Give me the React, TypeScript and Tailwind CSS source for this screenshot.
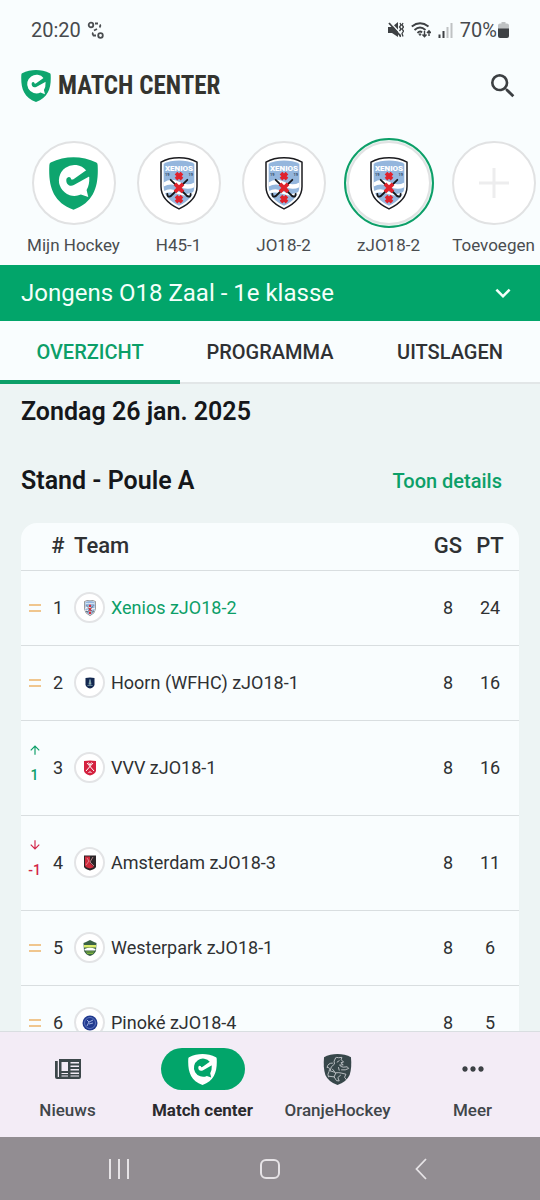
import { useState } from 'react';
import { MdSearch, MdArrowUpward, MdArrowDownward, MdMoreHoriz, MdKeyboardArrowDown } from 'react-icons/md';

type Trend = 'same' | 'up' | 'down';
type Crest = 'xenios' | 'hoorn' | 'vvv' | 'amsterdam' | 'westerpark' | 'pinoke';

interface Standing {
  rank: number;
  team: string;
  crest: Crest;
  trend: Trend;
  shift?: number;
  played: number;
  points: number;
}

const standings: Standing[] = [
  { rank: 1, team: 'Xenios zJO18-2', crest: 'xenios', trend: 'same', played: 8, points: 24 },
  { rank: 2, team: 'Hoorn (WFHC) zJO18-1', crest: 'hoorn', trend: 'same', played: 8, points: 16 },
  { rank: 3, team: 'VVV zJO18-1', crest: 'vvv', trend: 'up', shift: 1, played: 8, points: 16 },
  { rank: 4, team: 'Amsterdam zJO18-3', crest: 'amsterdam', trend: 'down', shift: -1, played: 8, points: 11 },
  { rank: 5, team: 'Westerpark zJO18-1', crest: 'westerpark', trend: 'same', played: 8, points: 6 },
  { rank: 6, team: 'Pinoké zJO18-4', crest: 'pinoke', trend: 'same', played: 8, points: 5 },
];

const teams = ['Mijn Hockey', 'H45-1', 'JO18-2', 'zJO18-2', 'Toevoegen'];
const tabs = ['OVERZICHT', 'PROGRAMMA', 'UITSLAGEN'];

function MatchLogo({ className, shield, mark }: { className: string; shield: string; mark: string }) {
  return (
    <svg viewBox="0 0 146 157" className={className} aria-hidden="true">
      <path d="M73 0C95 0 120 5 141 16Q145 18 145 24C148 84 136 134 73 157C10 134 -2 84 1 24Q1 18 5 16C26 5 51 0 73 0Z" fill={shield} />
      <path d="M111 40A46 46 0 1 0 95 111L117 119L112 98Q121 84 120 60Z" fill={mark} />
      <path d="M115 36L74 65C68 69 65 66 65 62Q58 56 52 64C49 78 60 90 74 83L125 55Z" fill={shield} />
    </svg>
  );
}

function XeniosCrest({ className }: { className: string }) {
  return (
    <svg viewBox="0 0 114 158" className={className} aria-hidden="true">
      <path d="M57 2Q88 2 111 15V88Q111 130 57 155Q3 130 3 88V15Q26 2 57 2Z" fill="#fff" stroke="#1b1b1f" strokeWidth="4.500" />
      <path d="M57 10Q84 10 103 20V88Q103 123 57 146Q11 123 11 88V20Q30 10 57 10Z" fill="#94b6dd" />
      <path d="M11 76Q32 60 57 74T103 76V90Q82 100 57 88T11 88ZM11 102Q32 90 57 104T103 102V109Q82 120 57 111T11 109Z" fill="#fff" />
      <text x="57" y="41" textAnchor="middle" fill="#fff" fontFamily="Roboto, sans-serif" fontWeight="900" fontSize="24">XENIOS</text>
      <text x="22" y="57" textAnchor="middle" fill="#33475f" fontFamily="Roboto, sans-serif" fontWeight="600" fontSize="12">19</text>
      <text x="92" y="57" textAnchor="middle" fill="#33475f" fontFamily="Roboto, sans-serif" fontWeight="600" fontSize="12">19</text>
      <path d="M32 68L82 117Q92 122 92 110M82 68L32 117Q22 122 22 110" fill="none" stroke="#17171a" strokeWidth="5.500" strokeLinecap="round" />
      <g stroke="#e0222c" strokeWidth="11" fill="none">
        <path d="M48 48L66 66M66 48L48 66" />
        <path d="M45 80L69 104M69 80L45 104" />
        <path d="M48 117L66 135M66 117L48 135" />
      </g>
    </svg>
  );
}

function LionShield({ className }: { className: string }) {
  return (
    <svg viewBox="0 0 86 92" className={className} aria-hidden="true">
      <path d="M43 0C57 0 72 3 83 10Q86 42 79 62Q70 82 43 92Q16 82 7 62Q0 42 3 10C14 3 29 0 43 0Z" fill="#37474a" />
      <g fill="none" stroke="#c9cdd0" strokeWidth="2.600" strokeLinecap="round" strokeLinejoin="round">
        <path d="M37 12Q40 8 46 11L56 10L54 17L61 24L53 26L60 32L49 33Q53 38 60 39L72 38L76 43L66 47L55 47" />
        <path d="M37 12Q30 22 34 30Q22 36 21 50Q30 52 38 56Q46 54 56 57L68 60L64 69L70 77M38 56L33 68L18 66M33 68L40 79L48 80L44 70L52 63" />
        <path d="M28 27Q15 26 12 40Q22 38 18 52Q12 60 16 68M42 24L48 20M46 40L48 48M28 45L34 52" />
      </g>
    </svg>
  );
}

function TeamCrest({ crest }: { crest: Crest }) {
  if (crest === 'xenios') return <XeniosCrest className="h-4 w-3" />;
  return (
    <svg viewBox="0 0 16 16" className="size-4" aria-hidden="true">
      {crest === 'hoorn' && (
        <>
          <path d="M3.500 3Q8 2 12.500 3V9.500Q12 12.500 8 13.500Q4 12.500 3.500 9.500Z" fill="#14284f" />
          <path d="M8 4.500L9 9H7ZM5.500 10.500Q8 9.500 10.500 10.500" fill="#d8cf63" stroke="#7ba5c4" strokeWidth=".8" />
        </>
      )}
      {crest === 'vvv' && (
        <>
          <path d="M2 1Q8 0 14 1V11Q13 14 8 15.500Q3 14 2 11Z" fill="#d4213f" />
          <path d="M5 3L12 11M11 3L4 11M6.500 2.500L8 5L9.500 2.500M6.500 13L8 11.500L9.500 13" fill="none" stroke="#fff" strokeWidth="1" />
        </>
      )}
      {crest === 'amsterdam' && (
        <>
          <path d="M2 0.500H14V12Q13 14 8 15.500Q3 14 2 12Z" fill="#2c2528" />
          <path d="M3 1.500H8V8L12 12L8 13.500Q4 12.500 3 11Z" fill="#cf2a3c" />
          <path d="M4 10L7 6L5 3M11 2L8 7L12 11" fill="none" stroke="#eaa8ae" strokeWidth=".7" />
        </>
      )}
      {crest === 'westerpark' && (
        <>
          <path d="M4 2L8 0L12 2L14.500 3L14 11Q12 15 8 16Q4 15 2 11L1.500 3Z" fill="#3a6145" />
          <path d="M2 5H14V7.500H2Z" fill="#d9eb68" />
          <path d="M2.500 9Q8 6.500 13.500 9V10.500H2.500Z" fill="#fff" />
          <path d="M4 12H12M5 13.500H11" stroke="#7fb53c" strokeWidth="1" />
        </>
      )}
      {crest === 'pinoke' && (
        <>
          <circle cx="8" cy="8" r="7.500" fill="#213a8f" />
          <circle cx="8" cy="8" r="5.500" fill="none" stroke="#6d83c7" strokeWidth=".8" />
          <path d="M5 11L7 7L11 5M7 9L11 8M7 7L5 5" fill="none" stroke="#9fb0e0" strokeWidth="1" />
        </>
      )}
    </svg>
  );
}

function TrendMark({ trend, shift }: { trend: Trend; shift?: number }) {
  if (trend === 'same') {
    return (
      <div className="mx-auto flex w-3 flex-col gap-1">
        <span className="h-0.5 bg-[#f0c68e]" />
        <span className="h-0.5 bg-[#f0c68e]" />
      </div>
    );
  }
  const up = trend === 'up';
  return (
    <div className={`flex flex-col items-center gap-2 text-sm leading-5 font-medium ${up ? 'text-[#0c9f68]' : 'text-[#d32548]'}`}>
      {up ? <MdArrowUpward className="size-3.5" /> : <MdArrowDownward className="size-3.5" />}
      {shift}
    </div>
  );
}

function StatusBar() {
  return (
    <div className="flex h-[60px] shrink-0 items-center justify-between pr-[31px] pl-[31px] text-xl text-[#474a4d]">
      <div className="flex items-center gap-1.5">
        <span>20:20</span>
        <svg viewBox="0 0 18 18" className="size-[18px]" fill="none" stroke="#4b4e51" strokeWidth="1.800" aria-hidden="true">
          <circle cx="4" cy="4" r="2.300" />
          <circle cx="13.500" cy="14.500" r="2.300" />
          <path d="M8 2.500H11M13 3.500Q14 5 12.500 6.500M10 8L7 9.500M6 11.500Q5 13 6.500 14.500H9" />
        </svg>
      </div>
      <div className="flex items-center gap-[7px]">
        <svg viewBox="0 0 16 16" className="size-4" aria-hidden="true">
          <path d="M0 5H4L10 0V15L4 11H0Z" fill="#3e4144" />
          <path d="M1.500 -.5L15 14" stroke="#f9fdfe" strokeWidth="1.500" />
          <path d="M1 1L12.500 14" stroke="#3e4144" strokeWidth="1.800" />
          <path d="M12 1L13 3L11.500 5L13 7L11.500 9M15 1L14 3L15.500 5L14 7L15.500 9L14 11.500L15 14.500M11.500 12L12.500 15" fill="none" stroke="#3e4144" strokeWidth="1.300" />
        </svg>
        <svg viewBox="0 0 20 16" className="h-4 w-5" fill="none" stroke="#3e4144" strokeWidth="1.900" aria-hidden="true">
          <path d="M.8 4.500Q9 -2 17.500 4.500M3.500 8Q9 3 14.500 8M6.500 11Q9 8.500 11 10.500" />
          <circle cx="9" cy="12.500" r=".8" fill="#3e4144" strokeWidth="1" />
          <path d="M13.500 9V14.500M11.500 12.500L13.500 14.800L15.500 12.500M18 14V9M16 11L18 8.700L20 11" strokeWidth="1.400" />
        </svg>
        <svg viewBox="0 0 15 16" className="h-4 w-[15px]" aria-hidden="true">
          <path d="M1.500 12.500V16M5.500 9V16" stroke="#3e4144" strokeWidth="2" />
          <path d="M9.500 5V16M13.500 1V16" stroke="#bfc2c3" strokeWidth="2" />
        </svg>
        <div className="flex items-center gap-px">
          <span>70%</span>
          <svg viewBox="0 0 11 16" className="h-4 w-[11px]" aria-hidden="true">
            <path d="M3.500 0H7.500V1.500H9Q11 1.500 11 3.500V7H0V3.500Q0 1.500 2 1.500H3.500Z" fill="#bfc2c3" />
            <path d="M0 6.500H11V14Q11 16 9 16H2Q0 16 0 14Z" fill="#3e4144" />
          </svg>
        </div>
      </div>
    </div>
  );
}

export default function App() {
  const [team, setTeam] = useState('zJO18-2');
  const [tab, setTab] = useState('OVERZICHT');

  return (
    <div className="flex h-screen flex-col overflow-hidden bg-[#f9fdfe] font-[Roboto,sans-serif] text-[#2f3133]">
      <StatusBar />

      <header className="flex h-[52px] shrink-0 items-center justify-between pr-[21px] pl-[21px]">
        <div className="flex items-center gap-[7px]">
          <MatchLogo className="h-8 w-[30px]" shield="#0ea56e" mark="#fff" />
          <h1 className="font-['Liberation_Sans_Narrow','Roboto_Condensed',Roboto,sans-serif] text-[25px] font-bold text-[#34342f]">MATCH CENTER</h1>
        </div>
        <button type="button" aria-label="Zoeken">
          <MdSearch className="size-8 text-[#3c3f42]" />
        </button>
      </header>

      {/* team picker, scrolls sideways */}
      <div className="flex h-[153px] shrink-0 overflow-hidden pt-[26px] pl-[21px]">
        {teams.map((name) => (
          <button
            key={name}
            type="button"
            onClick={() => setTeam(name)}
            className="flex w-[105px] shrink-0 flex-col items-center gap-[7px]"
          >
            <span className={`flex size-[90px] items-center justify-center rounded-full border-2 ${team === name ? 'border-[#0c9f68] bg-[#e4f5ef]' : 'border-transparent'}`}>
              <span className="flex size-[84px] items-center justify-center rounded-full border-2 border-[#e1e2e3] bg-white">
                {name === 'Mijn Hockey' && <MatchLogo className="h-[53px] w-[49px]" shield="#0ea56e" mark="#fff" />}
                {name === 'Toevoegen' && (
                  <svg viewBox="0 0 30 30" className="size-[30px]" aria-hidden="true">
                    <path d="M15 0V30M0 15H30" stroke="#ededee" strokeWidth="3" />
                  </svg>
                )}
                {name !== 'Mijn Hockey' && name !== 'Toevoegen' && <XeniosCrest className="h-[53px] w-[38px]" />}
              </span>
            </span>
            <span className="text-[17px] leading-5 whitespace-nowrap text-[#4a4d50]">{name}</span>
          </button>
        ))}
      </div>

      <button type="button" className="flex h-14 shrink-0 items-center justify-between bg-[#02a56a] pr-[22px] pl-[21px] text-2xl text-[#f4fffa]">
        Jongens O18 Zaal - 1e klasse
        <MdKeyboardArrowDown className="size-[30px]" />
      </button>

      <div role="tablist" className="grid h-[63px] shrink-0 grid-cols-3 border-b-2 border-[#e2e6e7]">
        {tabs.map((name) => (
          <button
            key={name}
            type="button"
            role="tab"
            aria-selected={tab === name}
            onClick={() => setTab(name)}
            className={`-mb-0.5 border-b-4 pt-0.5 text-xl font-medium ${tab === name ? 'border-[#0c9f68] text-[#0c9f68]' : 'border-transparent'}`}
          >
            {name}
          </button>
        ))}
      </div>

      <main className="min-h-0 flex-1 overflow-hidden bg-[#edf4f4] px-[21px] pt-3">
        <h2 className="text-[25px] leading-8 font-semibold text-[#15171a]">Zondag 26 jan. 2025</h2>
        <div className="mt-[37px] flex items-center justify-between pr-[17px]">
          <h2 className="text-[25px] leading-8 font-semibold text-[#15171a]">Stand - Poule A</h2>
          <button type="button" className="text-xl font-medium text-[#0c9f68]">Toon details</button>
        </div>

        <div className="mt-[26px] rounded-t-2xl bg-[#f9fdfe]">
          <table className="w-full table-fixed">
            <thead>
              <tr className="h-[47px] border-b border-[#d9dee0] text-[22px] leading-7">
                <th className="w-[27px]" aria-label="Verschil" />
                <th className="w-5 font-medium">#</th>
                <th className="pl-1.5 text-left font-medium">Team</th>
                <th className="w-[42px] font-medium">GS</th>
                <th className="w-[42px] font-medium">PT</th>
                <th className="w-2" aria-hidden="true" />
              </tr>
            </thead>
            <tbody className="text-lg leading-5">
              {standings.map((row) => (
                <tr key={row.rank} className={`border-b border-[#d9dee0] ${row.trend === 'same' ? 'h-[75px]' : 'h-[95px]'}`}>
                  <td className={row.trend === 'same' ? '' : 'pb-2'}>
                    <TrendMark trend={row.trend} shift={row.shift} />
                  </td>
                  <td className="text-center">{row.rank}</td>
                  <td className="pl-1.5">
                    <div className="flex items-center gap-1.5">
                      <span className="flex size-[31px] items-center justify-center rounded-full border-2 border-[#e3e4e6] bg-white">
                        <TeamCrest crest={row.crest} />
                      </span>
                      <span className={row.rank === 1 ? 'text-[#0c9f68]' : ''}>{row.team}</span>
                    </div>
                  </td>
                  <td className="text-center">{row.played}</td>
                  <td className="text-center">{row.points}</td>
                  <td />
                </tr>
              ))}
            </tbody>
          </table>
        </div>
      </main>

      <nav className="grid h-[106px] shrink-0 grid-cols-4 border-t border-[#d9dee1] bg-[#f3ecf6] pt-4 text-[17px] leading-6 text-[#40464a]">
        <a href="#nieuws" className="flex flex-col items-center gap-2 font-medium">
          <span className="flex h-[42px] items-center">
            <svg viewBox="0 0 26 20" className="h-5 w-[26px]" fill="#3c474a" aria-hidden="true">
              <path fillRule="evenodd" d="M4 0H26V18Q26 20 24 20H2Q0 20 0 18V2H3V18H4ZM6.500 3V12H13V3ZM15.500 3V4.500H24V3ZM15.500 6.500V8H24V6.500ZM15.500 10V11.500H24V10ZM6.500 14V15H13V14ZM15.500 13.500V15H24V13.500ZM6.500 16.500V17.500H13V16.500ZM15.500 16.500V17.500H24V16.500Z" />
              <path d="M3.200 2V18" stroke="#f3ecf6" strokeWidth=".8" />
            </svg>
          </span>
          Nieuws
        </a>
        <a href="#match-center" aria-current="page" className="flex flex-col items-center gap-2 font-bold text-[#2a2a2e]">
          <span className="flex h-[42px] w-[84px] items-center justify-center rounded-full bg-[#02a56a]">
            <MatchLogo className="h-[31px] w-[29px]" shield="#fff" mark="#02a56a" />
          </span>
          Match center
        </a>
        <a href="#oranjehockey" className="flex flex-col items-center gap-2 font-medium">
          <span className="flex h-[42px] items-center">
            <LionShield className="h-[31px] w-[29px]" />
          </span>
          OranjeHockey
        </a>
        <a href="#meer" className="flex flex-col items-center gap-2 font-medium">
          <span className="flex h-[42px] items-center">
            <MdMoreHoriz className="size-8 text-[#3c4145]" />
          </span>
          Meer
        </a>
      </nav>

      {/* Android system buttons */}
      <div className="grid h-[63px] shrink-0 grid-cols-3 bg-[#928d92] px-[43px]">
        <button type="button" aria-label="Recente apps" className="flex items-center justify-center gap-[7px]">
          <span className="h-5 w-0.5 bg-[#e6e3e6]" />
          <span className="h-5 w-0.5 bg-[#e6e3e6]" />
          <span className="h-5 w-0.5 bg-[#e6e3e6]" />
        </button>
        <button type="button" aria-label="Startscherm" className="flex items-center justify-center">
          <span className="size-5 rounded-md border-2 border-[#e6e3e6]" />
        </button>
        <button type="button" aria-label="Terug" className="flex items-center justify-center">
          <svg viewBox="0 0 12 22" className="h-[22px] w-3" fill="none" stroke="#e6e3e6" strokeWidth="1.800" aria-hidden="true">
            <path d="M11 1L1.500 11L11 21" />
          </svg>
        </button>
      </div>
    </div>
  );
}
